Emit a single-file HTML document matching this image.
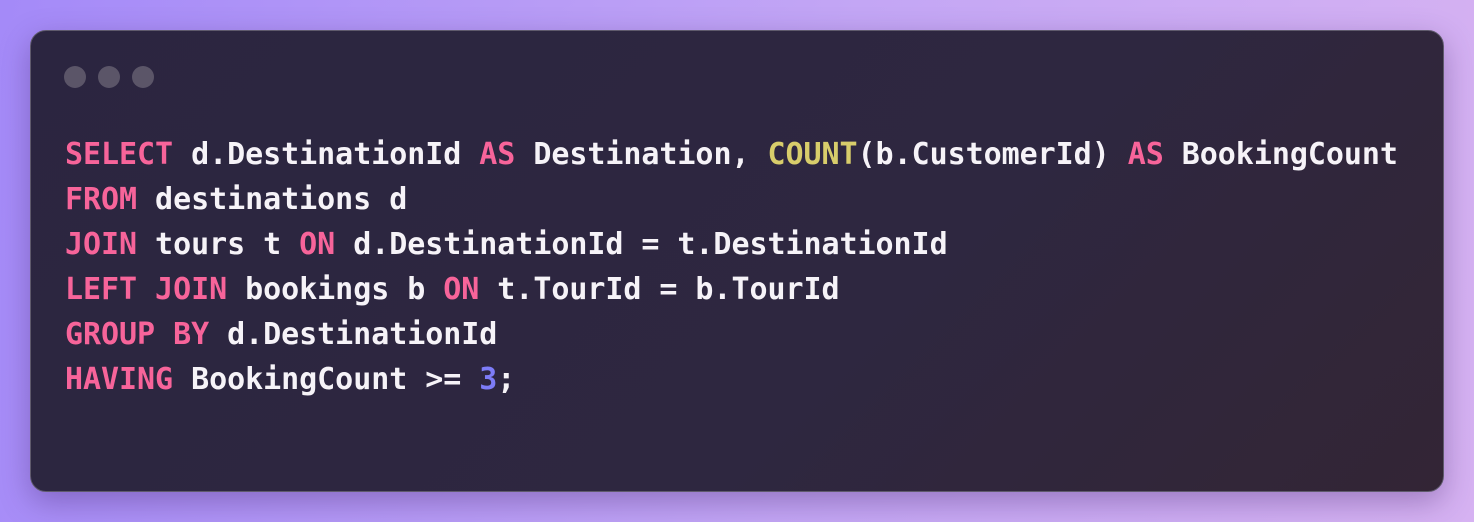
<!DOCTYPE html>
<html><head><meta charset="utf-8"><style>
html,body{margin:0;padding:0}
body{width:1474px;height:522px;overflow:hidden;background:linear-gradient(100deg,#a48af8 0%,#c3a6f5 55%,#d6b2f2 100%);position:relative}
.win{position:absolute;left:30px;top:30px;width:1412px;height:460px;border:1px solid #5f5a6c;border-radius:16px;background:linear-gradient(135deg,#2b2540 0%,#2e2740 60%,#332535 100%);box-shadow:0 10px 30px rgba(60,30,100,.35)}
.dot{position:absolute;top:35px;width:22px;height:22px;border-radius:50%;background:#5b5568}
pre{position:absolute;left:34px;top:101px;margin:0;font-family:"DejaVu Sans Mono",monospace;font-size:30px;line-height:45px;font-weight:bold;color:#f6f3f8;letter-spacing:-0.05px}
.k{color:#f7649a}.f{color:#d8cd6b}.n{color:#7d7cf7}
</style></head><body>
<div class="win">
<div class="dot" style="left:33px"></div><div class="dot" style="left:67px"></div><div class="dot" style="left:101px"></div>
<pre><span class="k">SELECT</span> d.DestinationId <span class="k">AS</span> Destination, <span class="f">COUNT</span>(b.CustomerId) <span class="k">AS</span> BookingCount
<span class="k">FROM</span> destinations d
<span class="k">JOIN</span> tours t <span class="k">ON</span> d.DestinationId = t.DestinationId
<span class="k">LEFT JOIN</span> bookings b <span class="k">ON</span> t.TourId = b.TourId
<span class="k">GROUP BY</span> d.DestinationId
<span class="k">HAVING</span> BookingCount &gt;= <span class="n">3</span>;</pre>
</div>
</body></html>
